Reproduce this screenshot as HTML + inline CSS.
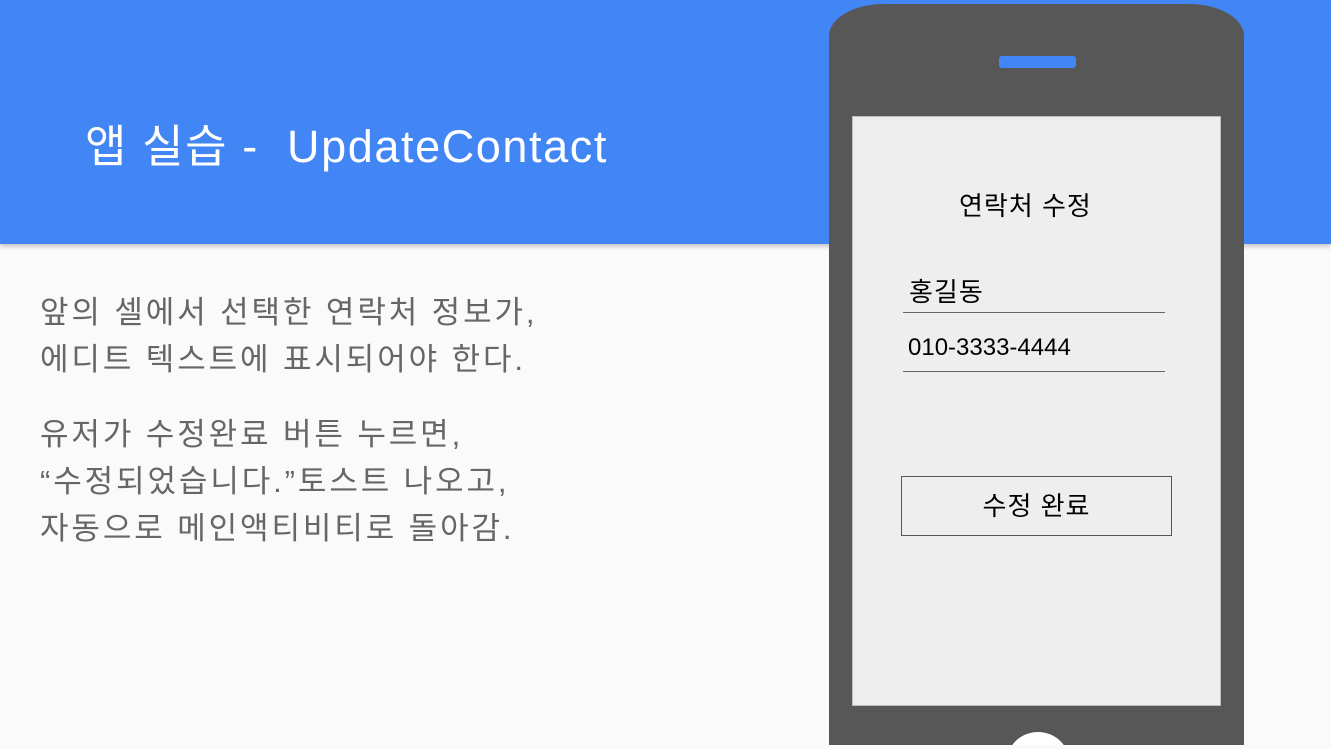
<!DOCTYPE html>
<html><head><meta charset="utf-8"><style>
html,body{margin:0;width:1331px;height:749px;overflow:hidden}
body{background:#fafafa;position:relative;font-family:"Liberation Sans","Noto Sans CJK KR",sans-serif}
.hdr{position:absolute;left:0;top:0;width:1331px;height:244px;background:#4285f4;box-shadow:0 2px 5px rgba(0,0,0,.25)}
.title{position:absolute;left:85px;top:110px;color:#fff;font-size:45px;letter-spacing:1.6px;white-space:nowrap}
.txt{position:absolute;left:40px;color:#666;font-size:31px;letter-spacing:2.9px;line-height:47px;white-space:nowrap}
.phone{position:absolute;left:829px;top:4px;width:415px;height:741px;background:#575757;border-radius:55px 55px 0 0/32px 32px 0 0}
.spk{position:absolute;left:999px;top:56px;width:77px;height:12px;background:#4285f4;border-radius:3px}
.scr{position:absolute;left:852px;top:116px;width:369px;height:590px;background:#eee;border:1px solid #bbb;box-sizing:border-box}
.homew{position:absolute;left:1006px;top:732px;width:64px;height:13px;overflow:hidden}
.home{width:64px;height:64px;border-radius:50%;background:#fff}
.s{position:absolute;color:#000;font-size:26px;white-space:nowrap}
.ln{position:absolute;left:903px;width:262px;height:1px;background:#666}
.btn{position:absolute;left:901px;top:476px;width:271px;height:60px;border:1px solid #555;box-sizing:border-box;text-align:center;line-height:58px;font-size:26px;letter-spacing:1px}
</style></head><body>
<div class="hdr"></div>
<div class="title">앱 실습 -&nbsp; UpdateContact</div>
<div class="txt" style="top:289px">앞의 셀에서 선택한 연락처 정보가,<br>에디트 텍스트에 표시되어야 한다.</div>
<div class="txt" style="top:411px">유저가 수정완료 버튼 누르면,<br>“수정되었습니다.”토스트 나오고,<br>자동으로 메인액티비티로 돌아감.</div>
<div class="phone"></div>
<div class="spk"></div>
<div class="scr"></div>
<div class="homew"><div class="home"></div></div>
<div class="s" style="left:959px;top:186px;letter-spacing:1px">연락처 수정</div>
<div class="s" style="left:909px;top:272px;letter-spacing:1px">홍길동</div>
<div class="ln" style="top:312px"></div>
<div class="s" style="left:908px;top:334px;font-size:24px">010-3333-4444</div>
<div class="ln" style="top:371px"></div>
<div class="btn">수정 완료</div>
</body></html>
